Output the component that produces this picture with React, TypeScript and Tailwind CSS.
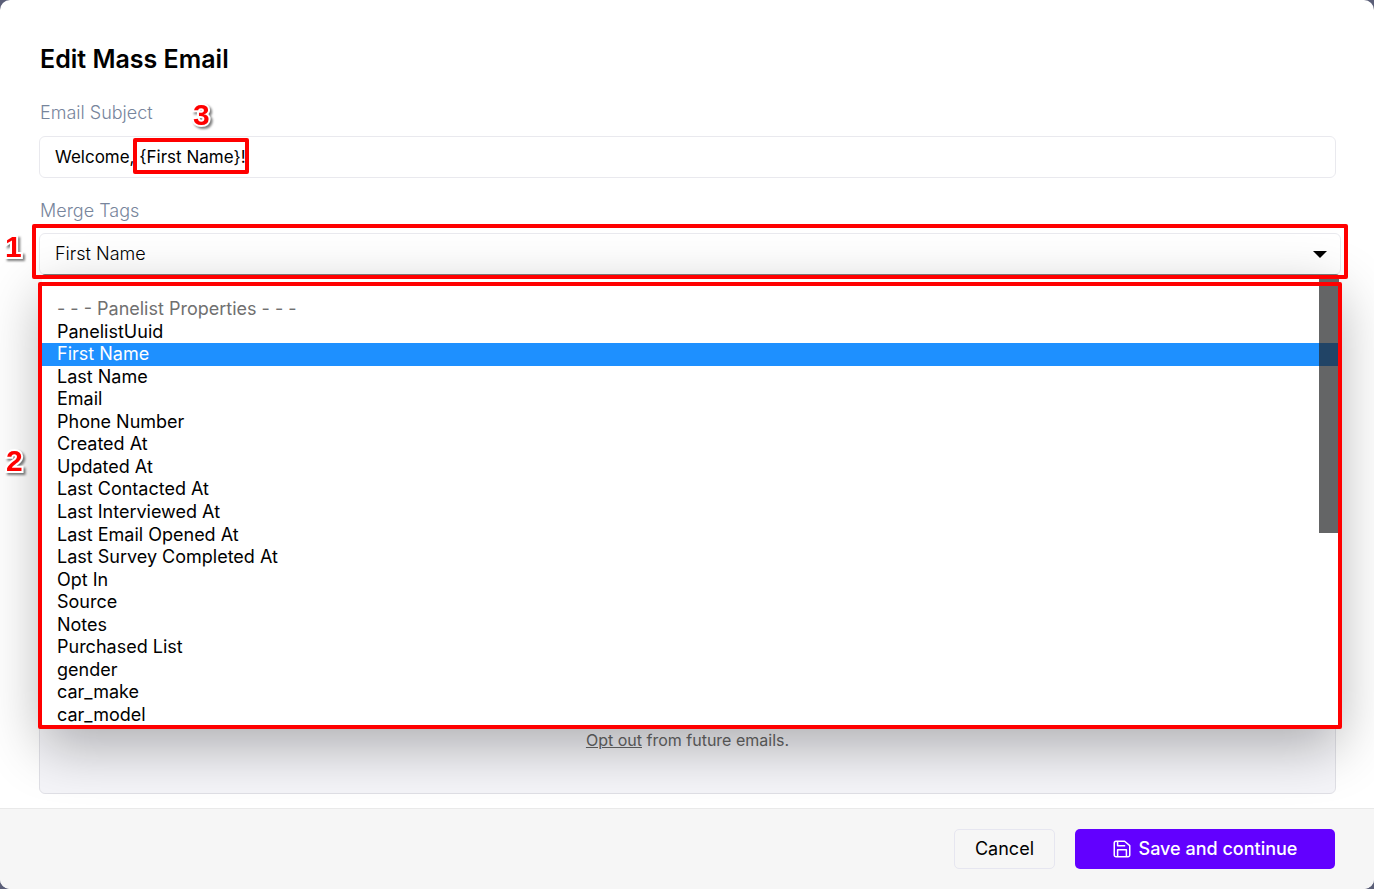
import { useState } from "react";
import type { ReactNode } from "react";

const tags = [
  "PanelistUuid",
  "First Name",
  "Last Name",
  "Email",
  "Phone Number",
  "Created At",
  "Updated At",
  "Last Contacted At",
  "Last Interviewed At",
  "Last Email Opened At",
  "Last Survey Completed At",
  "Opt In",
  "Source",
  "Notes",
  "Purchased List",
  "gender",
  "car_make",
  "car_model",
];

function Marker({ children, className }: { children: ReactNode; className: string }) {
  return (
    <span
      className={`pointer-events-none absolute z-30 font-['Liberation_Sans',Arial,sans-serif] text-[30px] leading-8 font-bold text-[#ff0000] [filter:drop-shadow(2px_2px_1px_rgba(0,0,0,0.5))] [paint-order:stroke_fill] [-webkit-text-stroke:4px_white] ${className}`}
    >
      {children}
    </span>
  );
}

function Outline({ className }: { className: string }) {
  return (
    <span
      aria-hidden="true"
      className={`pointer-events-none absolute z-20 rounded-[2px] border-4 border-[#ff0000] ${className}`}
    />
  );
}

function SaveIcon() {
  return (
    <svg width="18" height="18" viewBox="0 0 18 18" fill="none" stroke="currentColor" strokeWidth="1.5" strokeLinejoin="round" aria-hidden="true">
      <path d="M3 1.25h8.6L16.75 5.6V15a1.75 1.75 0 0 1-1.75 1.75H3A1.75 1.75 0 0 1 1.25 15V3A1.75 1.75 0 0 1 3 1.25Z" />
      <path d="M4.6 1.5v4.25h7.6" />
      <path d="M4.6 16.5V9.75h8.8v6.75" />
    </svg>
  );
}

export default function App() {
  const [subject, setSubject] = useState("Welcome, {First Name}!");
  const [tag, setTag] = useState("First Name");

  return (
    <div className="min-h-screen bg-[#5b5f78] font-[Inter,sans-serif] text-lg text-black">
      <form className="flex min-h-screen flex-col overflow-hidden rounded-[10px] bg-white" onSubmit={(e) => e.preventDefault()}>
        <main className="flex grow flex-col pt-[43px] pr-[38px] pb-3.5 pl-[39px]">
          <h1 className="pl-px text-[25px] leading-8 font-semibold">Edit Mass Email</h1>

          <div className="relative mt-6 flex flex-col">
            <label htmlFor="subject" className="pl-px leading-7 font-light text-[#77859c]">
              Email Subject
            </label>
            <Marker className="top-0 left-[154px]">3</Marker>
            <div className="relative mt-[9px] flex">
              <input
                id="subject"
                value={subject}
                onChange={(e) => setSubject(e.target.value)}
                className="h-[42px] w-full rounded-md border border-[#e9e9ee] px-[15px] text-[17px] outline-none"
              />
              <Outline className="top-[2px] left-[94px] h-9 w-[116px]" />
            </div>
          </div>

          <div className="relative z-10 mt-[19px] flex flex-col">
            <label htmlFor="tags" className="pl-px leading-7 font-light text-[#77859c]">
              Merge Tags
            </label>
            <div className="relative mt-2 -mr-[5px] flex">
              <select
                id="tags"
                value={tag}
                onChange={(e) => setTag(e.target.value)}
                className="h-[42px] w-full appearance-none rounded-md border border-[#e9e9ee] bg-white px-[15px] font-light outline-none"
              >
                {tags.map((t) => (
                  <option key={t}>{t}</option>
                ))}
              </select>
              <svg className="pointer-events-none absolute top-[18px] right-[14px]" width="14" height="7" viewBox="0 0 14 7" aria-hidden="true">
                <path d="M0 0h14L7 7Z" />
              </svg>
              <Outline className="-top-[9px] -right-[7px] -left-[7px] h-[55px]" />
              <Marker className="-top-[2px] -left-[34px]">1</Marker>
              <Marker className="top-[212px] -left-[33px]">2</Marker>

              <div className="absolute top-[41px] right-[2px] left-[3px] rounded-[3px] border-t border-[#767676] bg-white pt-[23px] shadow-[0_20px_56px_rgba(0,0,0,0.3)]">
                <ul role="listbox" aria-label="Merge tag options" className="grid h-[428px] auto-rows-fr">
                  <li className="flex items-center px-[15px] leading-5 text-[#707070]">- - - Panelist Properties - - -</li>
                  {tags.map((t) => (
                    <li
                      key={t}
                      role="option"
                      aria-selected={t === tag}
                      onClick={() => setTag(t)}
                      className={`flex items-center px-[15px] leading-5 ${t === tag ? "bg-[#1e90ff] text-white" : ""}`}
                    >
                      {t}
                    </li>
                  ))}
                </ul>
                <span className="absolute top-0 right-0 h-[258px] w-5 bg-[#222325]/70" />
                <Outline className="top-[7px] -right-[3px] -bottom-[3px] -left-[4px]" />
              </div>
            </div>
          </div>

          <section className="mt-4 flex grow flex-col items-center justify-end rounded-md border border-[#e0e0e6] bg-[#f5f5f9] pb-[41px] text-base leading-6 text-[#666666]">
            <p>
              <a href="#opt-out" className="underline">
                Opt out
              </a>{" "}
              from future emails.
            </p>
          </section>
        </main>

        <footer className="flex justify-end gap-5 border-t border-[#e9e9e9] bg-[#f6f6f6] px-[39px] py-5">
          <button type="button" className="h-10 rounded-[5px] border border-[#e6e6f0] px-5">
            Cancel
          </button>
          <button type="submit" className="flex h-10 w-[260px] items-center justify-center gap-2 rounded-[5px] bg-[#6200ff] font-medium text-white">
            <SaveIcon />
            Save and continue
          </button>
        </footer>
      </form>
    </div>
  );
}
